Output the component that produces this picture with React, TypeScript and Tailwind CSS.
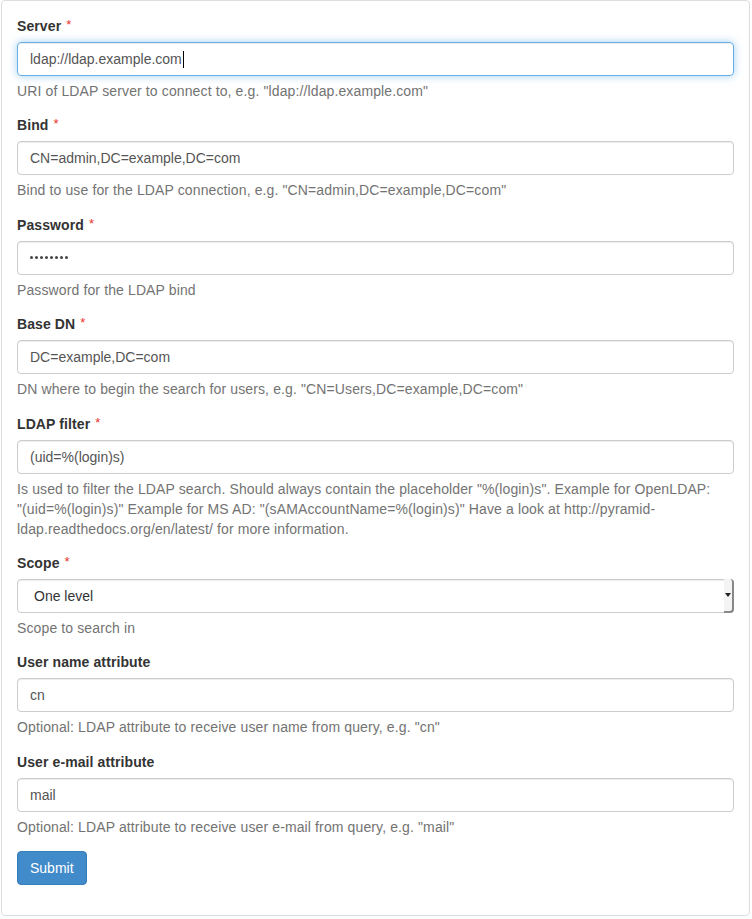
import React from "react";

interface Field {
  label: string;
  value: string;
  help: string[];
  required?: boolean;
  type?: "text" | "password" | "select";
  focused?: boolean;
}

const fields: Field[] = [
  {
    label: "Server",
    value: "ldap://ldap.example.com",
    help: ['URI of LDAP server to connect to, e.g. "ldap://ldap.example.com"'],
    required: true,
    focused: true,
  },
  {
    label: "Bind",
    value: "CN=admin,DC=example,DC=com",
    help: ['Bind to use for the LDAP connection, e.g. "CN=admin,DC=example,DC=com"'],
    required: true,
  },
  {
    label: "Password",
    value: "secret12",
    help: ["Password for the LDAP bind"],
    required: true,
    type: "password",
  },
  {
    label: "Base DN",
    value: "DC=example,DC=com",
    help: ['DN where to begin the search for users, e.g. "CN=Users,DC=example,DC=com"'],
    required: true,
  },
  {
    label: "LDAP filter",
    value: "(uid=%(login)s)",
    // wrapped the way the original page wraps it
    help: [
      'Is used to filter the LDAP search. Should always contain the placeholder "%(login)s". Example for OpenLDAP:',
      '"(uid=%(login)s)" Example for MS AD: "(sAMAccountName=%(login)s)" Have a look at http://pyramid-',
      "ldap.readthedocs.org/en/latest/ for more information.",
    ],
    required: true,
  },
  {
    label: "Scope",
    value: "One level",
    help: ["Scope to search in"],
    required: true,
    type: "select",
  },
  {
    label: "User name attribute",
    value: "cn",
    help: ['Optional: LDAP attribute to receive user name from query, e.g. "cn"'],
  },
  {
    label: "User e-mail attribute",
    value: "mail",
    help: ['Optional: LDAP attribute to receive user e-mail from query, e.g. "mail"'],
  },
];

function Control({ field }: { field: Field }) {
  if (field.type === "select") {
    return (
      <div className="relative flex h-[34px] items-center rounded-[4px] border border-[#ccc] bg-white pl-[16px] text-[#333] shadow-[inset_0_1px_1px_rgba(0,0,0,0.075)]">
        <span>{field.value}</span>
        <div className="absolute -right-px top-[-1px] flex h-[34px] w-[10px] items-center justify-center rounded-r-[4px] border-r-2 border-b-2 border-[#888] bg-[#f4f4f4]">
          <span className="h-0 w-0 border-x-[3px] border-t-[4px] border-x-transparent border-t-[#222]" />
        </div>
      </div>
    );
  }

  if (field.type === "password") {
    return (
      <div className="flex h-[34px] items-center rounded-[4px] border border-[#ccc] px-3 shadow-[inset_0_1px_1px_rgba(0,0,0,0.075)]">
        <span className="flex gap-[2px]">
          {Array.from({ length: 8 }).map((_, i) => (
            <span key={i} className="h-[3px] w-[3px] rounded-full bg-[#444]" />
          ))}
        </span>
      </div>
    );
  }

  return (
    <div
      className={`flex h-[34px] items-center rounded-[4px] border px-3 text-[#555] ${
        field.focused
          ? "border-[#66afe9] shadow-[inset_0_1px_1px_rgba(0,0,0,0.075),0_0_8px_rgba(102,175,233,0.6)]"
          : "border-[#ccc] shadow-[inset_0_1px_1px_rgba(0,0,0,0.075)]"
      }`}
    >
      <span>{field.value}</span>
      {field.focused && <span className="ml-px h-[17px] w-px bg-black" />}
    </div>
  );
}

export default function App() {
  return (
    <div className="bg-white pb-[2px] font-['Liberation_Sans',Arial,sans-serif] text-[14px] leading-[20px] text-[#333]">
      <form className="ml-px w-[749px] rounded-[4px] border border-[#ddd] p-[15px]">
        {fields.map((field) => (
          <div key={field.label} className="mb-[14.4px]">
            <label className="mb-[6px] flex h-[20px] items-start font-bold tracking-[0.1px]">
              <span>{field.label}</span>
              {field.required && (
                <span className="ml-[5px] mt-[2px] text-[13px] leading-[13px] font-normal text-[#e9322d]">
                  *
                </span>
              )}
            </label>
            <Control field={field} />
            <p className="mt-[5px] tracking-[0.12px] text-[#737373]">
              {field.help.map((line) => (
                <span key={line} className="block whitespace-nowrap">
                  {line}
                </span>
              ))}
            </p>
          </div>
        ))}
        <button
          type="button"
          className="mb-[15px] rounded-[4px] border border-[#357ebd] bg-[#428bca] px-3 py-[6px] text-white"
        >
          Submit
        </button>
      </form>
    </div>
  );
}
